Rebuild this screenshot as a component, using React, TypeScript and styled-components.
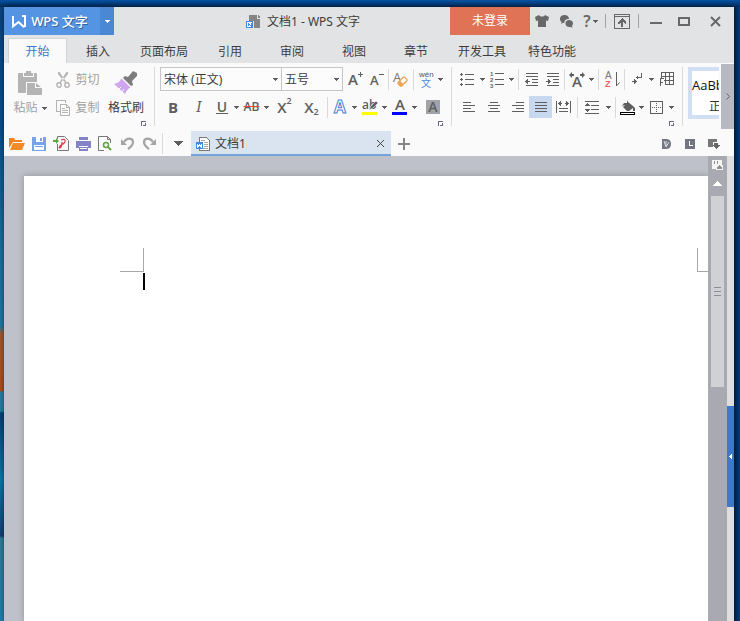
import React, { ReactNode } from "react";
import styled, { createGlobalStyle } from "styled-components";

const ink = "#5f5f5f";
const pale = "#b4b4b4";
const uiFont = `"Noto Sans", "Noto Sans CJK SC", sans-serif`;

const GlobalStyle = createGlobalStyle`
  *, *::before, *::after { box-sizing: border-box; }
  body { margin: 0; font-family: ${uiFont}; font-size: 12px; line-height: 16px; color: #3c3c3c; }
  button, select { font: inherit; color: inherit; }
`;

/* ---------- Shell ---------- */

const Desktop = styled.div`
  display: flex;
  min-height: 100vh;
  padding: 7px 6px 0 4px;
  background:
    linear-gradient(#0654a6, #002c5c) top / 100% 7px no-repeat,
    linear-gradient(90deg, #00254d, #003f80) right / 6px 100% no-repeat,
    linear-gradient(#0b4482 0, #0d4f88 130px, #176f9f 240px, #1d7ba6 326px, #a55a2c 334px, #b34d1d 391px,
      #2481a5 392px, #2481a5 411px, #0b3f79 413px, #087ba6 480px, #0b6696 500px, #173f78 536px, #347e9b 538px, #1d84ad 621px);
`;

const AppWindow = styled.div`
  display: flex;
  flex: 1;
  flex-direction: column;
  min-width: 0;
  background: #fafafa;
  box-shadow: 0 0 6px rgba(0, 0, 0, 0.5);
`;

const BareButton = styled.button`
  display: flex;
  align-items: center;
  justify-content: center;
  flex: none;
  padding: 0;
  border: 0;
  background: none;
  cursor: default;
`;

const Divider = styled.span<{ $tall?: boolean; $dark?: boolean }>`
  flex: none;
  align-self: ${(p) => (p.$tall ? "flex-start" : "center")};
  width: 1px;
  height: ${(p) => (p.$tall ? 59 : p.$dark ? 14 : 21)}px;
  margin: ${(p) => (p.$tall ? "4px 0 0" : "0 2px")};
  background: ${(p) => (p.$dark ? "#a4a4a6" : "#d9d9d9")};
`;

/* ---------- Title bar ---------- */

const TitleBar = styled.header`
  display: flex;
  height: 28px;
  background: #e2e3e5;
`;

const AppButton = styled(BareButton)`
  width: 96px;
  gap: 5px;
  background: #5494e3;
  color: #fff;
  font-size: 13px;
  font-weight: 500;
  text-shadow: 1px 1px 0 #35659f;
  padding-right: 4px;
`;

const AppMenuButton = styled(BareButton)`
  width: 14px;
  background: #4a88d4;
  color: #fff;
`;

const TitleText = styled.h1`
  display: flex;
  flex: 1;
  align-items: center;
  justify-content: center;
  gap: 6px;
  margin: 0;
  padding: 1px 0 0 42px;
  font-size: 12px;
  font-weight: 400;
  white-space: nowrap;
`;

const LoginButton = styled(BareButton)`
  width: 80px;
  background: #e07355;
  color: #fff;
`;

const TitleButton = styled(BareButton)<{ $w: number }>`
  width: ${(p) => p.$w}px;
  gap: 2px;
  color: #686868;
`;

const HelpMark = styled.span`
  font-size: 16px;
  font-weight: 600;
`;

/* ---------- Menu tabs ---------- */

const TabStrip = styled.nav`
  display: flex;
  height: 28px;
  padding: 3px 0 0 4px;
  background: #e2e3e5;
`;

const MenuTab = styled(BareButton)<{ $active?: boolean; $wide?: boolean }>`
  width: ${(p) => (p.$active ? 59 : p.$wide ? 70 : 62)}px;
  padding-top: 2px;
  border: 1px solid ${(p) => (p.$active ? "#d2d3d5" : "transparent")};
  border-bottom: 0;
  background: ${(p) => (p.$active ? "#fafafa" : "none")};
  color: ${(p) => (p.$active ? "#4178c4" : "#3c3c3c")};
`;

/* ---------- Ribbon ---------- */

const Ribbon = styled.div`
  display: flex;
  height: 68px;
  background: #fafafa;
`;

const Group = styled.div<{ $w: number }>`
  flex: none;
  width: ${(p) => p.$w}px;
  padding-top: 2px;
`;

const GroupBody = styled.div`
  display: flex;
  height: 56px;
  padding-left: 2px;
`;

const ToolRow = styled.div<{ $inset: number }>`
  display: flex;
  align-items: center;
  height: 28px;
  padding-left: ${(p) => p.$inset}px;
`;

const GroupFooter = styled.div`
  display: flex;
  justify-content: flex-end;
  padding-right: 8px;
`;

const Tool = styled(BareButton)<{ $w: number; $on?: boolean }>`
  width: ${(p) => p.$w}px;
  height: 22px;
  background: ${(p) => (p.$on ? "#c8d9ef" : "none")};
  color: ${ink};
`;

const BigTool = styled(BareButton)<{ $disabled?: boolean }>`
  flex-direction: column;
  justify-content: flex-start;
  gap: 3px;
  width: 48px;
  padding-top: 4px;
  color: ${(p) => (p.$disabled ? "#a2a2a2" : "#3c3c3c")};
`;

const BigIcon = styled.span`
  display: flex;
  align-items: center;
  height: 28px;
`;

const Caption = styled.span`
  display: flex;
  align-items: center;
  gap: 4px;
  white-space: nowrap;
`;

const SmallTools = styled.div`
  display: flex;
  flex-direction: column;
  width: 48px;
`;

const SmallTool = styled(BareButton)`
  gap: 5px;
  height: 28px;
  padding-top: 1px;
  color: #a2a2a2;
  white-space: nowrap;
`;

const ComboBox = styled.label<{ $w: number }>`
  display: grid;
  flex: none;
  align-items: center;
  width: ${(p) => p.$w}px;
  height: 24px;
  border: 1px solid #c6c6c6;
  background: #fcfcfc;
  & + & { margin-left: -1px; }
  & > * { grid-area: 1 / 1; }
  & > svg { justify-self: end; margin-right: 3px; pointer-events: none; }
`;

const ComboSelect = styled.select`
  width: 100%;
  height: 22px;
  padding: 2px 12px 0 3px;
  border: 0;
  outline: 0;
  appearance: none;
  background: transparent;
`;

const Letter = styled.span<{ $weight?: number; $size?: number }>`
  font-family: "Open Sans", sans-serif;
  font-size: ${(p) => p.$size ?? 14}px;
  font-weight: ${(p) => p.$weight ?? 600};
  line-height: 16px;
`;

const Italic = styled(Letter)`
  font-family: "DejaVu Serif", serif;
  font-style: italic;
`;

const Underlined = styled(Letter)`
  padding: 0 1px;
  border-bottom: 1px solid ${ink};
  line-height: 13px;
`;

const Struck = styled(Letter)`
  text-decoration: line-through;
  text-decoration-color: #ee4545;
`;

const Script = styled.span<{ $low?: boolean }>`
  align-self: ${(p) => (p.$low ? "flex-end" : "flex-start")};
  font-family: "Open Sans", sans-serif;
  font-size: 9px;
  font-weight: 600;
  line-height: ${(p) => (p.$low ? 12 : 10)}px;
`;

const Boxed = styled.span`
  display: flex;
  align-items: center;
  justify-content: center;
  width: 14px;
  height: 14px;
  background: #a0a3a8;
`;

const Gallery = styled.div`
  flex: 1;
  min-width: 0;
  margin: 4px 2px 0 5px;
  overflow: hidden;
`;

const StyleCard = styled(BareButton)`
  flex-direction: column;
  align-items: flex-start;
  gap: 6px;
  width: 66px;
  height: 52px;
  padding-top: 6px;
  border: 4px solid #d2def4;
  background: #fff;
  color: #111;
  white-space: nowrap;
`;

const StyleName = styled.span`
  align-self: center;
  color: #333;
`;

const ScrollRibbon = styled(BareButton)`
  width: 13px;
  height: 65px;
  margin-top: 1px;
  background: #b8bac3;
`;

/* ---------- Quick access and document tabs ---------- */

const QuickBar = styled.div`
  display: flex;
  align-items: center;
  height: 25px;
  padding: 0 8px 0 2px;
`;

const QuickButton = styled(BareButton)<{ $w?: number }>`
  width: ${(p) => p.$w ?? 22}px;
  height: 24px;
`;

const DocumentTab = styled.div`
  display: flex;
  align-items: center;
  width: 200px;
  height: 25px;
  padding: 2px 6px 0 5px;
  border-bottom: 2px solid #76a3dc;
  background: #dae4f0;
`;

const DocumentName = styled(BareButton)`
  flex: 1;
  justify-content: flex-start;
  gap: 5px;
`;

const Spring = styled.span`
  flex: 1;
`;

/* ---------- Document area ---------- */

const Workspace = styled.main`
  display: flex;
  flex: 1;
`;

const Canvas = styled.div`
  display: flex;
  flex: 1;
  min-width: 0;
  padding: 20px 0 0 20px;
  overflow: hidden;
  background: #bfc1ca;
`;

const Paper = styled.article`
  flex: 1;
  padding-top: 72px;
  background: #fff;
  box-shadow: 0 0 6px 1px #9b9ca5;
`;

const MarginMarks = styled.div`
  display: flex;
  justify-content: space-between;
  padding-left: 96px;
`;

const Corner = styled.span<{ $right?: boolean }>`
  width: ${(p) => (p.$right ? 11 : 24)}px;
  height: 24px;
  border: 0 solid #a8a8a8;
  border-width: ${(p) => (p.$right ? "0 0 1px 1px" : "0 1px 1px 0")};
`;

const TextCaret = styled.div`
  width: 2px;
  height: 17px;
  margin: 1px 0 0 119px;
  background: #000;
`;

const ScrollBar = styled.div`
  display: flex;
  flex: none;
  flex-direction: column;
  align-items: center;
  width: 19px;
  background: #a9a9b1;
`;

const ScrollCap = styled(BareButton)`
  width: 19px;
  height: 18px;
`;

const Thumb = styled.div`
  display: flex;
  align-items: center;
  justify-content: center;
  width: 13px;
  height: 191px;
  margin-top: 4px;
  background: #d0d1d5;
`;

const SideRail = styled.div`
  display: flex;
  flex: none;
  flex-direction: column;
  width: 7px;
  padding-top: 250px;
  background: #dedee0;
`;

const RailHandle = styled(BareButton)`
  width: 7px;
  height: 101px;
  background: #3c79c9;
`;

/* ---------- Icons ---------- */

type IconProps = { w: number; h: number; soft?: boolean; children: ReactNode };

const Svg = styled.svg`
  display: block;
  flex: none;
  overflow: visible;
`;

const Icon = ({ w, h, soft, children }: IconProps) => (
  <Svg width={w} height={h} viewBox={`0 0 ${w} ${h}`} fill="none" aria-hidden="true"
    shapeRendering={soft ? "auto" : "crispEdges"}>
    {children}
  </Svg>
);

const Bars = ({ at, color = ink }: { at: [number, number, number][]; color?: string }) => (
  <>{at.map(([x, y, w]) => <rect key={`${x}-${y}`} x={x} y={y} width={w} height={1} fill={color} />)}</>
);

const Down = ({ color = ink }: { color?: string }) => (
  <Icon w={5} h={3}><path d="M0 0h5v1H4v1H3v1H2V2H1V1H0z" fill={color} /></Icon>
);

const DropTool = ({ label }: { label: string }) => (
  <Tool $w={9} aria-label={label}><Down /></Tool>
);

const Launcher = ({ label }: { label: string }) => (
  <BareButton aria-label={label}>
    <Icon w={5} h={5}><path d="M0 5V0h5v1H1v4zM2 4h2V2h1v3H2z" fill="#68688c" /></Icon>
  </BareButton>
);

const WpsMark = () => (
  <Icon w={14} h={13} soft>
    <path d="M1 1v10.500L6.500 7l5 4.500L13 11V1H10" stroke="#fff" strokeWidth="2" />
  </Icon>
);

const TitleDocIcon = () => (
  <Icon w={15} h={14}>
    <path d="M3 0h6v6H3zM8 0h3v4h3v9H8zM12 0l2 2v1h-2z" fill="#858585" />
    <rect x=".5" y="6.500" width="6" height="6" fill="#fff" stroke="#4388df" />
    <path d="M2 8v3l1.500-1.500L5 11V8" stroke="#4388df" />
  </Icon>
);

const ShirtIcon = () => (
  <Icon w={14} h={12} soft><path d="M4 0c1 2 5 2 6 0l4 2-1 4-2-.5V12H3V5.500L1 6 0 2z" fill="#686868" /></Icon>
);

const ChatIcon = () => (
  <Icon w={13} h={13} soft>
    <path d="M4.500 0C7 0 9 1.600 9 3.900 6 3.700 4 5.500 4.600 8L3 7.800 1.300 9l.2-2C-1.500 4.500 0 0 4.500 0z" fill="#686868" />
    <path d="M9 5c4 0 5 4 3 5.800l.5 2-2-.9C7.500 12.400 5.500 11 5.500 8.600 5.500 6.500 7 5 9 5z" fill="#686868" />
  </Icon>
);

const HideRibbonIcon = () => (
  <Icon w={16} h={15}>
    <path d="M.5.5h15v14H.5zM0 2.500h16" stroke="#686868" />
    <path d="M7 13V7h2v6zM8 4l4 4v2h-1L8 7l-3 3H4V8z" fill="#686868" />
  </Icon>
);

const MinIcon = () => <Icon w={12} h={10}><rect y="6" width="12" height="2" fill="#686868" /></Icon>;
const MaxIcon = () => <Icon w={12} h={10}><path d="M1 1.500h10V9H1z" stroke="#686868" strokeWidth="2" /></Icon>;
const CloseIcon = () => (
  <Icon w={11} h={11} soft><path d="M1 1l9 9M10 1l-9 9" stroke="#686868" strokeWidth="2" /></Icon>
);

const PasteIcon = () => (
  <Icon w={24} h={24} soft>
    <path d="M1 2h4v4h11V2h2q1 0 1 1v8H8v11H1q-1 0-1-1V3q0-1 1-1z" fill={pale} />
    <path d="M6 2h2V0h5v2h2v3H6z" fill={pale} />
    <path d="M9 12h8v5h7v7H9z" fill={pale} />
    <path d="M18 12l5 4h-5z" fill={pale} />
  </Icon>
);

const ScissorsIcon = () => (
  <Icon w={14} h={16} soft>
    <path d="M2 0l1.500 0L11 11l-2-.5L2 2zM12 0l-1.500 0L3 11l2-.5L12 2z" fill={pale} />
    <circle cx="3" cy="13" r="2.200" stroke={pale} strokeWidth="1.400" />
    <circle cx="11" cy="13" r="2.200" stroke={pale} strokeWidth="1.400" />
  </Icon>
);

const CopyIcon = () => (
  <Icon w={14} h={16}>
    <path d="M3.500 11.500h-3V.5h9v2M4.500 4.500h6l3 3v8h-9zM10.500 4.500v3h3M6 8.500h3M6 10.500h6M6 12.500h6" stroke={pale} />
  </Icon>
);

const BrushIcon = () => (
  <Icon w={24} h={24} soft>
    <path d="M19 0l4 2v3l-5 5 1 4-2 1L9 7l2-2 3 1z" fill="#7d7d7d" />
    <path d="M7.500 7.500l9 9Q13 18 11 23L0 13q5-1 7.500-5.500z" fill="#cfa5ef" />
    <path d="M8 21l2-3M5 18l2-2" stroke="#fafafa" />
  </Icon>
);

const GrowFont = ({ sign }: { sign: string }) => (
  <Icon w={16} h={17} soft>
    <text x="1" y="14" fontFamily="Open Sans" fontSize={sign === "+" ? 15 : 13} fontWeight="600" fill={ink}>A</text>
    <path d={sign === "+" ? "M11 3.500h5M13.500 1v5" : "M10 3.500h5"} stroke={ink} />
  </Icon>
);

const ClearFormatIcon = () => (
  <Icon w={16} h={17} soft>
    <text x="0" y="11" fontFamily="Open Sans" fontSize="13" fill="#777">A</text>
    <rect x="5" y="8" width="9" height="5" rx="1" transform="rotate(-45 9.500 10.500)" fill="#fff" stroke="#eda55b" strokeWidth="1.400" />
    <path d="M5 11.500l2-2 4 4-2 2H7l-2-2z" fill="#eda55b" />
  </Icon>
);

const PinyinIcon = () => (
  <Icon w={16} h={18} soft>
    <text x="1" y="7" fontFamily="Liberation Sans" fontSize="8" fill="#555">wén</text>
    <text x="3" y="17" fontFamily="Noto Sans CJK SC" fontSize="10" fill="#4e8ddd">文</text>
  </Icon>
);

const OutlineIcon = () => (
  <Icon w={16} h={16} soft>
    <text x="2" y="14" fontFamily="Open Sans" fontSize="17" fontWeight="700" fill="#fff" stroke="#4e7fd0">A</text>
  </Icon>
);

const HighlightIcon = () => (
  <Icon w={16} h={16} soft>
    <text x="0" y="10" fontFamily="Open Sans" fontSize="12" fontWeight="600" fill={ink}>ab</text>
    <path d="M14 2L9 7l-2 4 4-2 5-5z" fill={ink} stroke="#fafafa" strokeWidth=".5" />
    <rect y="13" width="15" height="3" fill="#ff0" />
  </Icon>
);

const FontColorIcon = () => (
  <Icon w={15} h={16} soft>
    <text x="3" y="11" fontFamily="Open Sans" fontSize="15" fontWeight="600" fill={ink}>A</text>
    <rect y="13" width="15" height="3" fill="#00f" />
  </Icon>
);

const BulletsIcon = () => (
  <Icon w={14} h={13}>
    <Bars at={[[5, 1, 9], [5, 6, 9], [5, 11, 9]]} />
    {[0, 5, 10].map((y) => <path key={y} d={`M1 ${y}h1v1h1v1H2v1H1V${y + 2}H0V${y + 1}h1z`} fill={ink} />)}
  </Icon>
);

const NumberingIcon = () => (
  <Icon w={14} h={17}>
    <Bars at={[[5, 2, 9], [5, 8, 9], [5, 13, 9]]} />
    {["1", "2", "3"].map((n, i) => (
      <text key={n} x="0" y={5 + i * 6} fontFamily="Liberation Sans" fontSize="6" fontWeight="700" fill={ink}>{n}</text>
    ))}
  </Icon>
);

const IndentIcon = ({ right }: { right?: boolean }) => (
  <Icon w={13} h={13}>
    <Bars at={[[1, 0, 12], [1, 3, 12], [7, 6, 6], [7, 9, 6], [1, 12, 12]]} />
    <path d={right ? "M0 8h2V6h1v1h1v1h1v1H4v1H3v1H2V9H0z" : "M5 8H3V6H2v1H1v1H0v1h1v1h1v1h1V9h2z"} fill={ink} />
  </Icon>
);

const TextDirectionIcon = () => (
  <Icon w={16} h={15} soft>
    <text x="3" y="15" fontFamily="Open Sans" fontSize="15" fontWeight="600" fill={ink}>A</text>
    <path d="M0 3l3-3v2h2v2H3v2zM16 3l-3-3v2h-2v2h2v2z" fill={ink} />
  </Icon>
);

const SortIcon = () => (
  <Icon w={16} h={18} soft>
    <text x="1" y="9" fontFamily="Liberation Sans" fontSize="10" fill="#777">A</text>
    <text x="1" y="17" fontFamily="Liberation Sans" fontSize="9" fontWeight="700" fill="#ee6262">Z</text>
    <path d="M12.500 2v14M13 15.500l2.500-3" stroke={ink} />
  </Icon>
);

const MarksIcon = () => (
  <Icon w={11} h={12}>
    <path d="M9 0h1v5H6v1H5V5H4V4h1V3h1v1h3z" fill={ink} />
    <path d="M0 8h2V6h1v1h1v1h1v1H4v1H3v1H2V9H0z" fill={ink} />
  </Icon>
);

const TableIcon = () => (
  <Icon w={14} h={14}>
    <path d="M1.500 6V.5h12v12H5M1 4.500h13M4 8.500h10M5.500 0v13M9.500 0v13M.5 14V6.500H4M0 10.500h3" stroke={ink} />
  </Icon>
);

type Align = "left" | "center" | "right" | "justify";
const AlignIcon = ({ kind }: { kind: Align }) => {
  const x = kind === "center" ? 2 : kind === "right" ? 4 : 0;
  const w = kind === "justify" ? 12 : 8;
  return <Icon w={12} h={10}><Bars at={[[x, 0, w], [0, 3, 12], [x, 6, w], [0, 9, 12]]} /></Icon>;
};

const DistributeIcon = () => (
  <Icon w={15} h={12}>
    <path d="M.5 0v12M14.500 0v12" stroke={ink} />
    <Bars at={[[3, 7, 9], [3, 10, 9]]} />
    <path d="M2 2h1V1h1V0h1v2h1v1H5v2H4V4H3V3H2zM13 2h-1V1h-1V0h-1v2H9v1h1v2h1V4h1V3h1z" fill={ink} />
  </Icon>
);

const SpacingIcon = () => (
  <Icon w={14} h={13}>
    <Bars at={[[0, 0, 14], [6, 4, 8], [6, 8, 8], [0, 12, 14]]} />
    <path d="M2 2h1v1h1v1h1v1H0V4h1V3h1zM0 8h5v1H4v1H3v1H2v-1H1V9H0z" fill={ink} />
  </Icon>
);

const FillIcon = () => (
  <Icon w={15} h={15} soft>
    <path d="M7 0l1 2 5 4 2 2v3h-2V8l-4 3H7L3 7l4-4zM2 6l2-3h6" fill={ink} />
    <path d="M.5 12.500h14v2H.5z" fill="#fff" stroke="#000" shapeRendering="crispEdges" />
  </Icon>
);

const BorderIcon = () => (
  <Icon w={13} h={13}>
    <path d="M.5.5h12v12H.5z" stroke={ink} />
    <path d="M2 6.500h9M6.500 2v9" stroke={ink} strokeDasharray="1 1" />
  </Icon>
);

const OpenIcon = () => (
  <Icon w={16} h={12} soft>
    <path d="M0 10V0h5l1 2h7v2H4z" fill="#ef8420" />
    <path d="M4 5h12l-3 7H1z" fill="#f28a28" />
  </Icon>
);

const SaveIcon = () => (
  <Icon w={14} h={14}>
    <path d="M0 0h14v14H0z" fill="#77a4e8" />
    <path d="M4 0h7v5H4zM2 8h10v5H2z" fill="#fff" />
    <path d="M8 1h2v3H8zM3 9h8v1H3z" fill="#77a4e8" />
  </Icon>
);

const PdfIcon = () => (
  <Icon w={16} h={15} soft>
    <path d="M4.500 3V.5h7l4 4v10h-11V8" stroke="#777" />
    <path d="M0 4h3V2l3 3-3 3V6H0z" fill="#62a343" />
    <path d="M8 4q5-2 4 2-1 2-4 3-3 3-1 3 2-1 2-6" stroke="#d6434b" strokeWidth="1.300" />
  </Icon>
);

const PrintIcon = () => (
  <Icon w={15} h={14}>
    <path d="M3 0h9v3H3zM0 4h15v7h-3V9H3v2H0zM3 10h9v4H3z" fill="#8583c8" />
    <path d="M4 11h7v1H4z" fill="#fff" />
  </Icon>
);

const PreviewIcon = () => (
  <Icon w={14} h={15} soft>
    <path d="M6 14.500H.5V.5h9l3 3V7M9.500.5v3h3" stroke="#777" />
    <circle cx="8" cy="9" r="2.500" stroke="#62a343" strokeWidth="1.500" />
    <path d="M10 11l3 3" stroke="#62a343" strokeWidth="2" />
  </Icon>
);

const TurnIcon = ({ redo }: { redo?: boolean }) => (
  <Icon w={13} h={13} soft>
    <g transform={redo ? "translate(13 0) scale(-1 1)" : undefined}>
      <path d="M3 5c3-5 9-4 9 0 0 3-2 5-5 7" stroke="#a4a4a4" strokeWidth="2.200" />
      <path d="M0 2v6h6z" fill="#a4a4a4" />
    </g>
  </Icon>
);

const TabDocIcon = () => (
  <Icon w={14} h={14}>
    <path d="M3.500 5V.5h7l3 3v10H3.500V12" fill="#fff" stroke="#777" />
    <path d="M5 3.500h4M8 5.500h4M8 7.500h4M8 9.500h4M6 11.500h6" stroke="#aaa" />
    <rect y="5" width="7" height="7" fill="#4388df" />
    <path d="M1.500 7v3l2-2 2 2V7" stroke="#fff" />
  </Icon>
);

const PlusIcon = () => <Icon w={12} h={12}><path d="M6 0v12M0 6h12" stroke="#858585" strokeWidth="2" /></Icon>;

const DocerIcon = () => (
  <Icon w={9} h={10} soft>
    <path d="M0 0h4q5 0 5 5t-5 5H0z" fill="#737583" />
    <path d="M2 2l2 6 3-5M4 7V2" stroke="#dcdde2" />
  </Icon>
);

const ClockIcon = () => (
  <Icon w={10} h={10}>
    <rect width="10" height="10" rx="1" fill="#737583" />
    <path d="M4.500 2v4H8" stroke="#fff" />
  </Icon>
);

const PanelIcon = () => (
  <Icon w={12} h={10}>
    <path d="M0 0h9v3H5v5H0z" fill="#777" />
    <path d="M6 4h4v2h2v1h-1v1h-1v1H9v1H8V9H7V8H6V7H5V6h1z" fill="#666" />
  </Icon>
);

const ViewIcon = () => (
  <Icon w={11} h={10}>
    <path d="M0 0h10v5h1v5H4V9H0z" fill="#f5f5f5" />
    <path d="M2 1h1v3H2zM5 1h1v3H5zM5 9V7h1V6h1V5h1v1h1v1h1v2z" fill="#8f8f98" />
  </Icon>
);

/* ---------- Page ---------- */

const menuTabs = ["开始", "插入", "页面布局", "引用", "审阅", "视图", "章节", "开发工具", "特色功能"];

const quickActions: [string, ReactNode][] = [
  ["打开", <OpenIcon />],
  ["保存", <SaveIcon />],
  ["输出为PDF", <PdfIcon />],
  ["打印", <PrintIcon />],
  ["打印预览", <PreviewIcon />],
  ["撤销", <TurnIcon />],
  ["恢复", <TurnIcon redo />],
];

const TitleRow = () => (
  <TitleBar>
    <AppButton><WpsMark />WPS 文字</AppButton>
    <AppMenuButton aria-label="应用菜单"><Down color="#fff" /></AppMenuButton>
    <TitleText><TitleDocIcon />文档1 - WPS 文字</TitleText>
    <LoginButton>未登录</LoginButton>
    <TitleButton $w={24} aria-label="皮肤"><ShirtIcon /></TitleButton>
    <TitleButton $w={24} aria-label="反馈"><ChatIcon /></TitleButton>
    <TitleButton $w={25} aria-label="帮助"><HelpMark>?</HelpMark><Down /></TitleButton>
    <Divider $dark />
    <TitleButton $w={28} aria-label="隐藏功能区"><HideRibbonIcon /></TitleButton>
    <Divider $dark />
    <TitleButton $w={29} aria-label="最小化"><MinIcon /></TitleButton>
    <TitleButton $w={27} aria-label="最大化"><MaxIcon /></TitleButton>
    <TitleButton $w={37} aria-label="关闭"><CloseIcon /></TitleButton>
  </TitleBar>
);

const ClipboardGroup = () => (
  <Group $w={150}>
    <GroupBody>
      <BigTool $disabled>
        <BigIcon><PasteIcon /></BigIcon>
        <Caption>粘贴<Down /></Caption>
      </BigTool>
      <SmallTools>
        <SmallTool><ScissorsIcon />剪切</SmallTool>
        <SmallTool><CopyIcon />复制</SmallTool>
      </SmallTools>
      <BigTool>
        <BigIcon><BrushIcon /></BigIcon>
        <Caption>格式刷</Caption>
      </BigTool>
    </GroupBody>
    <GroupFooter><Launcher label="剪贴板" /></GroupFooter>
  </Group>
);

const FontGroup = () => (
  <Group $w={296}>
    <ToolRow $inset={5}>
      <ComboBox $w={122}>
        <ComboSelect aria-label="字体"><option>宋体 (正文)</option></ComboSelect>
        <Down />
      </ComboBox>
      <ComboBox $w={62}>
        <ComboSelect aria-label="字号"><option>五号</option></ComboSelect>
        <Down />
      </ComboBox>
      <Tool $w={24} aria-label="增大字号"><GrowFont sign="+" /></Tool>
      <Tool $w={19} aria-label="减小字号"><GrowFont sign="-" /></Tool>
      <Divider />
      <Tool $w={20} aria-label="清除格式"><ClearFormatIcon /></Tool>
      <Divider />
      <Tool $w={20} aria-label="拼音指南"><PinyinIcon /></Tool>
      <DropTool label="拼音选项" />
    </ToolRow>
    <ToolRow $inset={5}>
      <Tool $w={26} aria-label="加粗"><Letter $weight={700} $size={15}>B</Letter></Tool>
      <Tool $w={26} aria-label="倾斜"><Italic $weight={400}>I</Italic></Tool>
      <Tool $w={20} aria-label="下划线"><Underlined>U</Underlined></Tool>
      <DropTool label="下划线选项" />
      <Tool $w={21} aria-label="删除线"><Struck $size={12}>AB</Struck></Tool>
      <DropTool label="删除线选项" />
      <Tool $w={27} aria-label="上标"><Letter $size={15}>X</Letter><Script>2</Script></Tool>
      <Tool $w={27} aria-label="下标"><Letter $size={15}>X</Letter><Script $low>2</Script></Tool>
      <Divider />
      <Tool $w={20} aria-label="文字效果"><OutlineIcon /></Tool>
      <DropTool label="文字效果选项" />
      <Tool $w={21} aria-label="突出显示"><HighlightIcon /></Tool>
      <DropTool label="突出显示颜色" />
      <Tool $w={21} aria-label="字体颜色"><FontColorIcon /></Tool>
      <DropTool label="字体颜色选项" />
      <Tool $w={28} aria-label="字符底纹"><Boxed><Letter>A</Letter></Boxed></Tool>
    </ToolRow>
    <GroupFooter><Launcher label="字体设置" /></GroupFooter>
  </Group>
);

const ParagraphGroup = () => (
  <Group $w={230}>
    <ToolRow $inset={4}>
      <Tool $w={22} aria-label="项目符号"><BulletsIcon /></Tool>
      <DropTool label="项目符号选项" />
      <Tool $w={20} aria-label="编号"><NumberingIcon /></Tool>
      <DropTool label="编号选项" />
      <Divider />
      <Tool $w={21} aria-label="减少缩进"><IndentIcon /></Tool>
      <Tool $w={20} aria-label="增加缩进"><IndentIcon right /></Tool>
      <Divider />
      <Tool $w={20} aria-label="中文版式"><TextDirectionIcon /></Tool>
      <DropTool label="中文版式选项" />
      <Divider />
      <Tool $w={21} aria-label="排序"><SortIcon /></Tool>
      <Divider />
      <Tool $w={20} aria-label="段落标记"><MarksIcon /></Tool>
      <DropTool label="段落标记选项" />
      <Tool $w={22} aria-label="插入表格"><TableIcon /></Tool>
    </ToolRow>
    <ToolRow $inset={4}>
      <Tool $w={26} aria-label="左对齐"><AlignIcon kind="left" /></Tool>
      <Tool $w={24} aria-label="居中"><AlignIcon kind="center" /></Tool>
      <Tool $w={23} aria-label="右对齐"><AlignIcon kind="right" /></Tool>
      <Tool $w={23} $on aria-label="两端对齐" aria-pressed="true"><AlignIcon kind="justify" /></Tool>
      <Tool $w={23} aria-label="分散对齐"><DistributeIcon /></Tool>
      <Divider />
      <Tool $w={24} aria-label="行距"><SpacingIcon /></Tool>
      <DropTool label="行距选项" />
      <Divider />
      <Tool $w={19} aria-label="底纹颜色"><FillIcon /></Tool>
      <DropTool label="底纹颜色选项" />
      <Tool $w={21} aria-label="边框"><BorderIcon /></Tool>
      <DropTool label="边框选项" />
    </ToolRow>
    <GroupFooter><Launcher label="段落设置" /></GroupFooter>
  </Group>
);

const QuickRow = () => (
  <QuickBar>
    {quickActions.map(([label, icon]) => (
      <QuickButton key={label} aria-label={label}>{icon}</QuickButton>
    ))}
    <Divider />
    <QuickButton $w={26} aria-label="自定义快速访问">
      <Icon w={9} h={5}><path d="M0 0h9v1H8v1H7v1H6v1H5v1H4V4H3V3H2V2H1V1H0z" fill={ink} /></Icon>
    </QuickButton>
    <DocumentTab>
      <DocumentName><TabDocIcon />文档1</DocumentName>
      <BareButton aria-label="关闭文档">
        <Icon w={9} h={9} soft><path d="M1 1l7 7M8 1L1 8" stroke="#444" /></Icon>
      </BareButton>
    </DocumentTab>
    <QuickButton $w={26} aria-label="新建文档"><PlusIcon /></QuickButton>
    <Spring />
    <QuickButton $w={24} aria-label="模板"><DocerIcon /></QuickButton>
    <QuickButton $w={24} aria-label="历史"><ClockIcon /></QuickButton>
    <QuickButton $w={24} aria-label="窗格"><PanelIcon /></QuickButton>
  </QuickBar>
);

export default function App() {
  return (
    <>
      <GlobalStyle />
      <Desktop>
        <AppWindow>
          <TitleRow />
          <TabStrip>
            {menuTabs.map((name, i) => (
              <MenuTab key={name} $active={i === 0} $wide={name.length > 2}>{name}</MenuTab>
            ))}
          </TabStrip>
          <Ribbon>
            <ClipboardGroup />
            <Divider $tall />
            <FontGroup />
            <Divider $tall />
            <ParagraphGroup />
            <Divider $tall />
            <Gallery>
              <StyleCard>
                <Letter $weight={400} $size={13}>AaBbCcDd</Letter>
                <StyleName>正文</StyleName>
              </StyleCard>
            </Gallery>
            <ScrollRibbon aria-label="更多功能">
              <Icon w={4} h={7} soft><path d="M.5.5l3 3-3 3" stroke="#666" /></Icon>
            </ScrollRibbon>
          </Ribbon>
          <QuickRow />
          <Workspace>
            <Canvas>
              <Paper>
                <MarginMarks><Corner /><Corner $right /></MarginMarks>
                <TextCaret />
              </Paper>
            </Canvas>
            <ScrollBar>
              <ScrollCap aria-label="视图切换"><ViewIcon /></ScrollCap>
              <ScrollCap aria-label="向上滚动">
                <Icon w={9} h={5}><path d="M4 0h1v1h1v1h1v1h1v1h1v1H0V4h1V3h1V2h1V1h1z" fill="#fff" /></Icon>
              </ScrollCap>
              <Thumb><Icon w={7} h={9}><Bars color="#8e8f95" at={[[0, 0, 7], [0, 4, 7], [0, 8, 7]]} /></Icon></Thumb>
            </ScrollBar>
            <SideRail>
              <RailHandle aria-label="展开任务窗格">
                <Icon w={3} h={5}><path d="M3 0v5H2V4H1V3H0V2h1V1h1V0z" fill="#fff" /></Icon>
              </RailHandle>
            </SideRail>
          </Workspace>
        </AppWindow>
      </Desktop>
    </>
  );
}
